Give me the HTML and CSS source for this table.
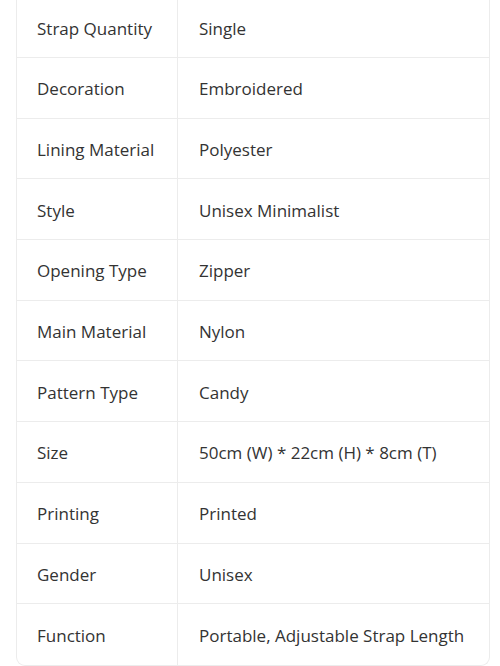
FILE: index.html
```html
<!DOCTYPE html>
<html>
<head>
<meta charset="utf-8">
<link rel="stylesheet" href="styles.css">
</head>
<body>
<div class="specs">
  <div class="row"><div class="key">Strap Quantity</div><div class="val">Single</div></div>
  <div class="row"><div class="key">Decoration</div><div class="val">Embroidered</div></div>
  <div class="row"><div class="key">Lining Material</div><div class="val">Polyester</div></div>
  <div class="row"><div class="key">Style</div><div class="val">Unisex Minimalist</div></div>
  <div class="row"><div class="key">Opening Type</div><div class="val">Zipper</div></div>
  <div class="row"><div class="key">Main Material</div><div class="val">Nylon</div></div>
  <div class="row"><div class="key">Pattern Type</div><div class="val">Candy</div></div>
  <div class="row"><div class="key">Size</div><div class="val">50cm (W) * 22cm (H) * 8cm (T)</div></div>
  <div class="row"><div class="key">Printing</div><div class="val">Printed</div></div>
  <div class="row"><div class="key">Gender</div><div class="val">Unisex</div></div>
  <div class="row"><div class="key">Function</div><div class="val">Portable, Adjustable Strap Length</div></div>
</div>
</body>
</html>
```
FILE: styles.css
```css
html, body {
  margin: 0;
  padding: 0;
  background: #ffffff;
}
body {
  font-family: "Open Sans", "Noto Sans", sans-serif;
  font-size: 17px;
  color: #333333;
  overflow: hidden;
}
.specs {
  margin: -2.7px 0 0 16px;
  width: 474px;
  box-sizing: border-box;
  border: 1px solid #ececec;
  border-top: none;
  border-radius: 0 0 9px 9px;
  overflow: hidden;
}
.row {
  display: grid;
  grid-template-columns: 161px 1fr;
  height: 60.7px;
  box-sizing: border-box;
  border-bottom: 1px solid #ececec;
}
.row:last-child {
  border-bottom: none;
}
.key, .val {
  display: flex;
  align-items: center;
  padding-left: 20px;
  padding-top: 2px;
}
.key {
  border-right: 1px solid #ececec;
}
.val {
  padding-left: 21px;
}
```
